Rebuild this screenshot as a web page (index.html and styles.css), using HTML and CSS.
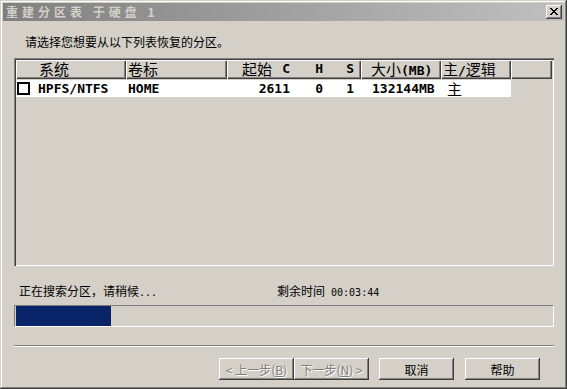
FILE: index.html
```html
<!DOCTYPE html>
<html lang="zh-CN">
<head>
  <meta charset="UTF-8">
  <title>重建分区表</title>
  <link rel="stylesheet" href="styles.css">
</head>
<body>
<div class="window">
  <div class="titlebar">
    <span class="title">重建分区表 于硬盘 1</span>
    <button class="close" aria-label="关闭">
      <svg width="8" height="7" viewBox="0 0 8 7" shape-rendering="crispEdges">
        <path d="M0 0h2v1H0zM6 0h2v1H6zM1 1h2v1H1zM5 1h2v1H5zM2 2h4v1H2zM3 3h2v1H3zM2 4h4v1H2zM1 5h2v1H1zM5 5h2v1H5zM0 6h2v1H0zM6 6h2v1H6z" fill="#000"/>
      </svg>
    </button>
  </div>

  <div class="content">
    <p class="prompt">请选择您想要从以下列表恢复的分区。</p>

    <div class="listview">
      <div class="list-head">
        <div class="hcell col-fs">系统</div>
        <div class="hcell col-label">卷标</div>
        <div class="hcell col-chs">
          <span class="chs-c"><span>起始</span><span class="mono">C</span></span>
          <span class="chs-h mono">H</span>
          <span class="chs-s mono">S</span>
        </div>
        <div class="hcell col-size">大小<span class="mono">(MB)</span></div>
        <div class="hcell col-type">主<span class="mono">/</span>逻辑</div>
        <div class="hcell col-rest"></div>
      </div>

      <div class="list-row">
        <div class="cell col-fs"><span class="checkbox"></span>HPFS/NTFS</div>
        <div class="cell col-label">HOME</div>
        <div class="cell col-chs">
          <span class="chs-c">2611</span>
          <span class="chs-h">0</span>
          <span class="chs-s">1</span>
        </div>
        <div class="cell col-size">132144MB</div>
        <div class="cell col-type cjk">主</div>
      </div>
    </div>

    <div class="status">
      <span class="status-msg">正在搜索分区，请稍候<span class="time">...</span></span>
      <span>剩余时间<span class="time"> 00:03:44</span></span>
    </div>

    <div class="progress">
      <div class="progress-fill"></div>
    </div>

    <div class="separator"></div>

    <div class="buttons">
      <div class="nav-pair">
        <button class="btn" disabled>&lt; 上一步(<u>B</u>)</button>
        <button class="btn" disabled>下一步(<u>N</u>) &gt;</button>
      </div>
      <button class="btn">取消</button>
      <button class="btn">帮助</button>
    </div>
  </div>
</div>
</body>
</html>
```

FILE: styles.css
```css
:root {
  --face: #d4d0c8;
  --shadow: #808080;
  --dark: #404040;
  --light: #ffffff;
  --navy: #0a246a;
}

* {
  margin: 0;
  padding: 0;
  box-sizing: border-box;
}

body {
  background: var(--face);
  font-family: "Noto Sans CJK SC", "Noto Sans", sans-serif;
  font-size: 12px;
  color: #000;
}

.window {
  width: 567px;
  height: 389px;
  padding: 3px;
  background: var(--face);
  box-shadow: inset -1px -1px var(--dark), inset 1px 1px var(--face),
              inset -2px -2px var(--shadow), inset 2px 2px var(--light);
  display: flex;
  flex-direction: column;
}

.titlebar {
  height: 18px;
  display: flex;
  align-items: center;
  padding: 0 2px 0 3px;
  background: linear-gradient(to right, #808080, #c0c0c0);
}

.title {
  font-weight: bold;
  font-size: 12px;
  line-height: 18px;
  letter-spacing: 4px;
  color: var(--face);
}

.close {
  margin-left: auto;
  width: 16px;
  height: 14px;
  border: none;
  background: var(--face);
  box-shadow: inset -1px -1px var(--dark), inset 1px 1px var(--light),
              inset -2px -2px var(--shadow), inset 2px 2px var(--face);
  display: flex;
  align-items: center;
  justify-content: center;
  padding: 0 1px 1px 0;
}

.content {
  flex: 1;
  padding: 0 10px 0 11px;
  display: flex;
  flex-direction: column;
}

.prompt {
  margin-top: 14px;
  padding-left: 11px;
  line-height: 14px;
}

/* list view */
.listview {
  margin-top: 9px;
  height: 208px;
  padding: 2px;
  box-shadow: inset 1px 1px var(--shadow), inset 2px 2px var(--dark),
              inset -1px -1px var(--light), inset -2px -2px var(--face);
}

.list-head {
  display: flex;
  height: 19px;
}

.hcell {
  height: 19px;
  font-size: 15px;
  line-height: 18px;
  white-space: nowrap;
  box-shadow: inset 1px 1px var(--light), inset -1px -1px var(--dark),
              inset -2px -2px var(--shadow);
}

.mono {
  font-family: "DejaVu Sans Mono", monospace;
  font-weight: bold;
  font-size: 13px;
}

.col-fs { width: 110px; }
.col-label { width: 101px; }
.col-chs { width: 134px; display: flex; }
.col-size { width: 80px; }
.col-type { width: 70px; }
.col-rest { flex: 1; }

.hcell.col-fs { padding-left: 23px; }
.hcell.col-label { padding-left: 2px; }
.hcell.col-size { padding-left: 10px; }
.hcell.col-type { padding-left: 2px; }

.chs-c { width: 63px; text-align: right; }
.chs-h { width: 33px; text-align: right; }
.chs-s { width: 31px; text-align: right; }

.hcell .chs-c {
  display: flex;
  justify-content: space-between;
  padding-left: 15px;
}

.list-row {
  display: flex;
  width: 495px;
  height: 17px;
  margin-top: 1px;
  background: var(--light);
  font-family: "DejaVu Sans Mono", monospace;
  font-weight: bold;
  font-size: 13px;
  line-height: 17px;
}

.cell {
  white-space: nowrap;
}

.cell.col-fs {
  display: flex;
  align-items: center;
  padding-left: 1px;
}

.checkbox {
  width: 13px;
  height: 13px;
  border: 2px solid #000;
  background: var(--light);
  margin-right: 8px;
}

.cell.col-label { padding-left: 2px; }
.cell.col-size { padding-left: 11px; }
.cell.col-type { padding-left: 6px; }

.cjk {
  font-family: "Noto Sans CJK SC", sans-serif;
  font-weight: normal;
  font-size: 15px;
}

/* status + progress */
.status {
  margin-top: 18px;
  padding-left: 5px;
  line-height: 14px;
  display: flex;
}

.status-msg {
  width: 258px;
}

.time {
  font-family: "DejaVu Sans Mono", monospace;
  font-size: 10px;
  white-space: pre;
}

.progress {
  margin-top: 5px;
  height: 22px;
  padding-left: 1px;
  border: 1px solid;
  border-color: var(--shadow) var(--light) var(--light) var(--shadow);
}

.progress-fill {
  width: 95px;
  height: 20px;
  background: var(--navy);
}

.separator {
  margin-top: 18px;
  border-top: 1px solid var(--shadow);
  border-bottom: 1px solid var(--light);
}

.buttons {
  margin-top: 11px;
  display: flex;
  justify-content: flex-end;
  gap: 11px;
  padding-right: 14px;
}

.nav-pair {
  display: flex;
  margin-right: -1px;
}

.btn {
  width: 75px;
  height: 22px;
  border: none;
  background: var(--face);
  font-family: "Noto Sans CJK SC", sans-serif;
  font-size: 12px;
  color: #000;
  box-shadow: inset -1px -1px var(--dark), inset 1px 1px var(--light),
              inset -2px -2px var(--shadow), inset 2px 2px var(--face);
}

.btn:disabled {
  color: var(--shadow);
  text-shadow: 1px 1px var(--light);
}

.btn u {
  text-decoration: underline;
}
```
